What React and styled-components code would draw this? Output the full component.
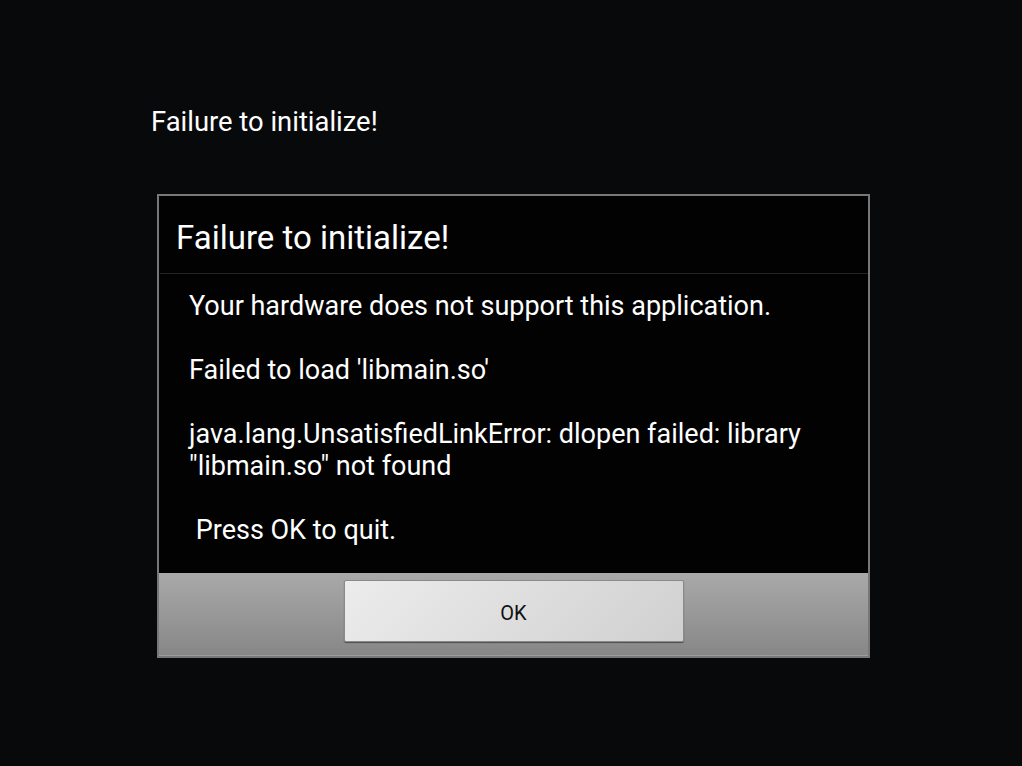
import React from 'react';
import styled, { createGlobalStyle } from 'styled-components';

const BODY_LINES = [
  'Your hardware does not support this application.',
  '',
  "Failed to load 'libmain.so'",
  '',
  'java.lang.UnsatisfiedLinkError: dlopen failed: library "libmain.so" not found',
  '',
  ' Press OK to quit.',
];

const GlobalStyle = createGlobalStyle`
  html, body {
    margin: 0;
    padding: 0;
    background: #08090b;
  }
  body {
    font-family: Roboto, "Liberation Sans", sans-serif;
    color: #fff;
  }
`;

function App() {
  const handleOk = () => {};

  return (
    <>
      <GlobalStyle />
      <Screen>
        <HeadTitle>Failure to initialize!</HeadTitle>
        <Dialog>
          <DialogTitle>Failure to initialize!</DialogTitle>
          <Divider />
          <Message>{BODY_LINES.join('\n')}</Message>
          <ButtonBar>
            <OkBtn onClick={handleOk}>OK</OkBtn>
          </ButtonBar>
        </Dialog>
      </Screen>
    </>
  );
}

export default App;

const Screen = styled.div`
  display: flex;
  flex-direction: column;
  align-items: flex-start;
  width: 1022px;
  height: 766px;
  padding: 106px 0 0 151px;
  box-sizing: border-box;
  background: #08090b;
`;

const HeadTitle = styled.h1`
  margin: 0;
  font-size: 27.4px;
  line-height: 32px;
  font-weight: 400;
  color: #fff;
`;

const Dialog = styled.div`
  display: flex;
  flex-direction: column;
  width: 713px;
  margin: 56px 0 0 6px;
  border: 2px solid #777;
  box-sizing: border-box;
  background: #020202;
`;

const DialogTitle = styled.div`
  display: flex;
  align-items: center;
  height: 77px;
  padding: 5px 0 0 17px;
  box-sizing: border-box;
  font-size: 33px;
  color: #fff;
`;

const Divider = styled.div`
  height: 1px;
  margin: 0 0 0 1px;
  background: #232323;
`;

const Message = styled.div`
  padding: 16px 30px 27px 30px;
  font-size: 27px;
  line-height: 32px;
  white-space: pre-wrap;
  color: #fff;
`;

const ButtonBar = styled.div`
  display: flex;
  justify-content: center;
  padding: 7px 0 13px;
  background: linear-gradient(#a9a9a9, #878787);
  border-bottom: 1px solid #9c9c9c;
`;

const OkBtn = styled.button`
  width: 340px;
  height: 62px;
  padding: 3px 0 0;
  border: 1px solid #8a8a8a;
  border-radius: 2px;
  background: linear-gradient(135deg, #ececec, #d0d0d0);
  box-shadow: 0 1px 1px rgba(0, 0, 0, 0.45);
  font-family: Roboto, "Liberation Sans", sans-serif;
  font-size: 20px;
  color: #111;
  cursor: pointer;
`;
